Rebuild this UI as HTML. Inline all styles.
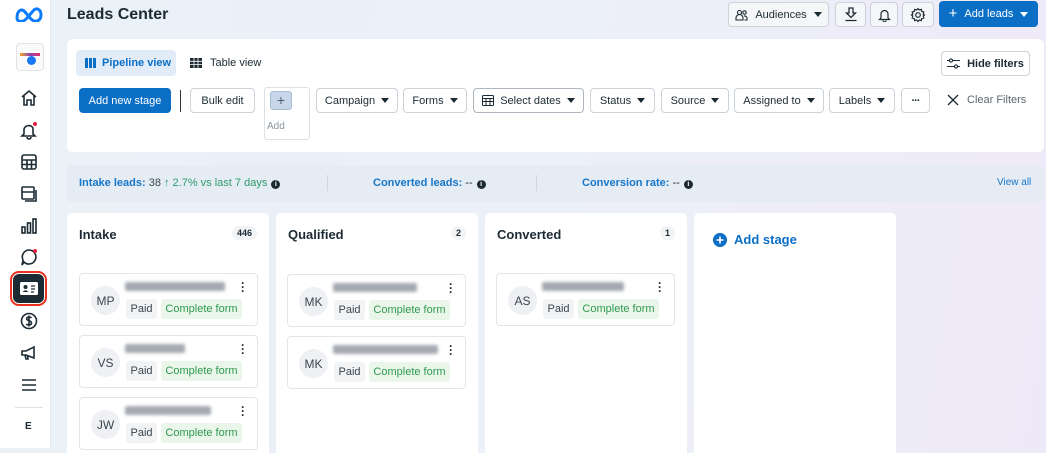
<!DOCTYPE html>
<html><head><meta charset="utf-8"><style>
*{box-sizing:border-box;margin:0;padding:0}
body{width:1046px;height:448px;overflow:hidden;font-family:"Liberation Sans",sans-serif;background:linear-gradient(100deg,#eaf1f7 0%,#ecf0f8 50%,#eee9f8 100%);position:relative;color:#1c2b33}
.a{position:absolute}
.side{left:0;top:0;width:51px;height:448px;background:#fff;border-right:1px solid #e4e8ee}
.btn{position:absolute;height:25px;border:1px solid #cbd2d9;border-radius:4px;background:#fff;font-size:11px;display:flex;align-items:center;justify-content:center;gap:6px;color:#1c2b33}
.caret{width:0;height:0;border-left:4px solid transparent;border-right:4px solid transparent;border-top:5px solid #1c2b33;display:inline-block}
.panel{background:#fff;border-radius:6px}
.col{background:#fff;border-radius:5px 5px 0 0;top:213px;height:240px}
.col h3{position:absolute;left:12px;top:14px;font-size:13px;font-weight:bold}
.cnt{position:absolute;top:13px;font-size:9px;font-weight:bold;background:#f1f3f5;border-radius:8px;padding:2px 5px}
.card{position:absolute;width:179px;height:53px;border:1px solid #e2e5e9;border-radius:4px;background:#fff}
.av{position:absolute;left:11px;top:12px;width:29px;height:29px;border-radius:50%;background:#eef0f3;font-size:12px;display:flex;align-items:center;justify-content:center;color:#3a474f}
.nm{position:absolute;left:45px;top:8px;height:9px;background:#a5aab1;filter:blur(1.5px);border-radius:2px}
.tg{position:absolute;top:25px;height:20px;font-size:11px;display:flex;align-items:center;justify-content:center;border-radius:3px}
.paid{left:46px;width:31px;background:#f1f3f5;color:#3a474f}
.cf{left:81px;width:81px;background:#eaf6ea;color:#2e9a4f}
.dots{position:absolute;right:12px;top:7px;font-size:12px;font-weight:bold;line-height:4px;color:#1c2b33}
.ic{position:absolute;left:19px;width:20px;height:20px}
.st{position:absolute;top:177px;font-size:11px}
.i{display:inline-block;width:9px;height:9px;border-radius:50%;background:#1c2b33;color:#fff;font-size:7px;text-align:center;line-height:9px;font-weight:bold;margin-left:4px}
</style></head><body>
<div class="a side">
<svg class="a" style="left:14px;top:6px" width="30" height="16" viewBox="0 0 30 16"><path d="M3 12 C3 4 8 2 11 6 L17 13 C21 17 27 15 27 9 C27 3 22 1 19 5 L13 12 C9 17 3 16 3 12Z" fill="none" stroke="#0a7cff" stroke-width="3"/></svg>
<div class="a" style="left:16px;top:43px;width:28px;height:28px;border:1px solid #e0e3e7;border-radius:4px;background:#fafafa"><div class="a" style="left:10px;top:12px;width:9px;height:9px;border-radius:50%;background:#1877f2"></div><div class="a" style="left:3px;top:9px;width:20px;height:3px;background:linear-gradient(90deg,#f5a623,#8e44ad,#e1306c)"></div></div>
<svg class="ic" style="top:88px" viewBox="0 0 20 20" fill="none" stroke="#1c2b33" stroke-width="1.6"><path d="M3 9 L10 3 L17 9 M5 8 V17 H8 V12 H12 V17 H15 V8"/></svg>
<svg class="ic" style="top:120px" viewBox="0 0 20 20" fill="none" stroke="#1c2b33" stroke-width="1.6"><path d="M5 14 V9 A5 5 0 0 1 14 8 V14 L16 16 H3 Z M8 17 A2 2 0 0 0 12 17"/><circle cx="16" cy="4" r="2" fill="#e41e3f" stroke="none"/></svg>
<svg class="ic" style="top:152px" viewBox="0 0 20 20" fill="none" stroke="#1c2b33" stroke-width="1.6"><rect x="3" y="3" width="14" height="14" rx="2"/><path d="M3 8 H17 M3 12.5 H17 M8 8 V17 M12.5 8 V17"/></svg>
<svg class="ic" style="top:184px" viewBox="0 0 20 20" fill="none" stroke="#1c2b33" stroke-width="1.6"><rect x="3" y="3" width="12" height="12" rx="1"/><path d="M3 8 H15 M6 17 H17 V6"/></svg>
<svg class="ic" style="top:216px" viewBox="0 0 20 20" fill="none" stroke="#1c2b33" stroke-width="1.6"><rect x="3" y="11" width="3" height="6"/><rect x="8.5" y="7" width="3" height="10"/><rect x="14" y="3" width="3" height="14"/></svg>
<svg class="ic" style="top:247px" viewBox="0 0 20 20" fill="none" stroke="#1c2b33" stroke-width="1.6"><path d="M10 3 A7 7 0 1 1 5 15 L3 18 L4 13 A7 7 0 0 1 10 3Z"/><circle cx="16" cy="4" r="2" fill="#e41e3f" stroke="none"/></svg>
<div class="a" style="left:10px;top:271px;width:37px;height:35px;border:2px solid #e8321e;border-radius:9px"></div>
<div class="a" style="left:13px;top:274px;width:31px;height:29px;background:#1c2b33;border-radius:6px"></div>
<svg class="a" style="left:19px;top:280px" width="20" height="17" viewBox="0 0 20 17"><rect x="1" y="2" width="18" height="13" rx="1.5" fill="#fff"/><circle cx="6.5" cy="7" r="2" fill="#1c2b33"/><path d="M3.5 12 Q6.5 8.5 9.5 12Z" fill="#1c2b33"/><path d="M12 6 H16 M12 9 H16 M12 12 H15" stroke="#1c2b33" stroke-width="1.3"/></svg>
<svg class="ic" style="top:311px" viewBox="0 0 20 20" fill="none" stroke="#1c2b33" stroke-width="1.6"><circle cx="10" cy="10" r="7.5"/><path d="M12.5 7 C11.5 5.5 7.5 5.7 7.7 8 C8 10 12.5 9 12.5 12 C12.5 14.3 8.5 14.5 7.3 13 M10 4.5 V15.5"/></svg>
<svg class="ic" style="top:343px" viewBox="0 0 20 20" fill="none" stroke="#1c2b33" stroke-width="1.6"><path d="M3 8 H7 L15 4 V15 L7 12 H3 Z M6 12 L7 16 H9 L8.5 12"/></svg>
<svg class="ic" style="top:375px" viewBox="0 0 20 20" fill="none" stroke="#1c2b33" stroke-width="1.6"><path d="M3 5 H17 M3 10 H17 M3 15 H17"/></svg>
<div class="a" style="left:15px;top:407px;width:28px;height:1px;background:#dde1e5"></div>
<div class="a" style="left:25px;top:421px;font-size:10px;font-weight:bold">E</div>
</div>

<div class="a" style="left:67px;top:6px;font-size:16px;font-weight:bold">Leads Center</div>
<div class="btn" style="left:728px;top:2px;width:101px;background:#f5f6f7;gap:7px"><svg width="13" height="12" viewBox="0 0 13 12" fill="none" stroke="#1c2b33" stroke-width="1.1"><circle cx="4.5" cy="3.5" r="2"/><circle cx="9.5" cy="3.5" r="1.7"/><path d="M1 11 V9 A3 3 0 0 1 8 9 V11Z M9 7 A2.5 2.5 0 0 1 12 9 V11 H9.5"/></svg>Audiences <span class="caret"></span></div>
<div class="btn" style="left:835px;top:2px;width:31px;background:#f5f6f7"><svg width="14" height="15" viewBox="0 0 14 15" fill="none" stroke="#1c2b33" stroke-width="1.3"><path d="M5 1 H9 V6 H11.5 L7 10.5 L2.5 6 H5Z M1.5 13.5 H12.5"/></svg></div>
<div class="btn" style="left:870px;top:2px;width:28px;background:#f5f6f7"><svg width="13" height="14" viewBox="0 0 13 14" fill="none" stroke="#1c2b33" stroke-width="1.2"><path d="M3 10 V6 A3.5 3.5 0 0 1 10 6 V10 L11.5 11.5 H1.5Z M5 12.5 A1.5 1.5 0 0 0 8 12.5"/></svg></div>
<div class="btn" style="left:902px;top:2px;width:32px;background:#f5f6f7"><svg width="16" height="16" viewBox="0 0 16 16" fill="none" stroke="#1c2b33" stroke-width="1.2"><circle cx="8" cy="8" r="2.3"/><path d="M8 1.5 L9.3 3 L11.3 2.4 L11.8 4.4 L13.8 5 L13.2 7 L14.5 8 L13.2 9 L13.8 11 L11.8 11.6 L11.3 13.6 L9.3 13 L8 14.5 L6.7 13 L4.7 13.6 L4.2 11.6 L2.2 11 L2.8 9 L1.5 8 L2.8 7 L2.2 5 L4.2 4.4 L4.7 2.4 L6.7 3Z"/></svg></div>
<div class="btn" style="left:939px;top:1px;width:99px;height:26px;background:#0b6fc6;border-color:#0b6fc6;color:#fff;gap:7px"><span style="font-size:15px;line-height:10px">+</span>Add leads <span class="caret" style="border-top-color:#fff"></span></div>

<div class="a panel" style="left:67px;top:39px;width:977px;height:113px"></div>
<div class="a" style="left:76px;top:50px;width:100px;height:26px;background:#e1ecf8;border-radius:4px;color:#0b6fc6;font-size:11px;font-weight:bold;display:flex;align-items:center;gap:6px;padding-left:9px"><svg width="11" height="10"><rect x="0" y="0" width="3" height="10" fill="#0b6fc6"/><rect x="4" y="0" width="3" height="10" fill="#0b6fc6"/><rect x="8" y="0" width="3" height="10" fill="#0b6fc6"/></svg>Pipeline view</div>
<div class="a" style="left:190px;top:57px;font-size:11px;display:flex;gap:8px;align-items:center"><svg width="12" height="10"><rect width="12" height="10" fill="#1c2b33"/><path d="M0 3.3H12M0 6.6H12M4 0V10M8 0V10" stroke="#fff" stroke-width="0.8"/></svg>Table view</div>
<div class="btn" style="left:941px;top:51px;width:89px;height:25px;font-weight:bold;gap:7px"><svg width="13" height="11" fill="none" stroke="#1c2b33" stroke-width="1.1"><path d="M0 2.5H13M0 8.5H13"/><circle cx="4" cy="2.5" r="1.6" fill="#fff"/><circle cx="9" cy="8.5" r="1.6" fill="#fff"/></svg>Hide filters</div>
<div class="btn" style="left:79px;top:88px;width:92px;background:#0b6fc6;border-color:#0b6fc6;color:#fff">Add new stage</div>
<div class="a" style="left:180px;top:90px;width:1px;height:22px;background:#333"></div>
<div class="btn" style="left:190px;top:88px;width:65px">Bulk edit</div>
<div class="a" style="left:264px;top:87px;width:46px;height:53px;border:1px solid #dde1e5;border-radius:3px"></div>
<div class="a" style="left:270px;top:91px;width:22px;height:19px;background:#c8d6ea;border:1px solid #a9bcd6;border-radius:3px;color:#4c5e74;font-size:14px;text-align:center;line-height:16px">+</div>
<div class="a" style="left:267px;top:121px;font-size:10px;color:#8a949c">Add</div>
<div class="btn" style="left:316px;top:88px;width:82px">Campaign <span class="caret"></span></div>
<div class="btn" style="left:403px;top:88px;width:64px">Forms <span class="caret"></span></div>
<div class="btn" style="left:473px;top:88px;width:111px;border-color:#aeb6bf"><svg width="12" height="11" fill="none" stroke="#1c2b33" stroke-width="1"><rect x="0.5" y="0.5" width="11" height="10" rx="1"/><path d="M0.5 3.5H11.5M0.5 6.5H11.5M4 3.5V10.5M8 3.5V10.5"/></svg>Select dates <span class="caret"></span></div>
<div class="btn" style="left:590px;top:88px;width:65px">Status <span class="caret"></span></div>
<div class="btn" style="left:661px;top:88px;width:68px">Source <span class="caret"></span></div>
<div class="btn" style="left:734px;top:88px;width:90px">Assigned to <span class="caret"></span></div>
<div class="btn" style="left:829px;top:88px;width:66px">Labels <span class="caret"></span></div>
<div class="btn" style="left:901px;top:88px;width:29px;font-weight:bold;letter-spacing:-1px">···</div>
<div class="a" style="left:947px;top:94px;font-size:11px;color:#5c6870;display:flex;gap:8px;align-items:center"><svg width="12" height="12" stroke="#1c2b33" stroke-width="1.3"><path d="M1 1L11 11M11 1L1 11"/></svg>Clear Filters</div>

<div class="a" style="left:67px;top:165px;width:977px;height:37px;background:#e4ebf3;border-radius:4px;opacity:.9"></div>
<div class="st" style="left:79px;color:#3a474f"><b style="color:#1877c9">Intake leads:</b> 38 <span style="color:#2e9a6a">↑ 2.7% vs last 7 days</span><span class="i">i</span></div>
<div class="a" style="left:327px;top:175px;width:1px;height:16px;background:#cfd6de"></div>
<div class="st" style="left:373px"><b style="color:#1877c9">Converted leads:</b> --<span class="i">i</span></div>
<div class="a" style="left:536px;top:175px;width:1px;height:16px;background:#cfd6de"></div>
<div class="st" style="left:582px"><b style="color:#1877c9">Conversion rate:</b> --<span class="i">i</span></div>
<div class="st" style="left:997px;color:#1877c9;font-size:10px">View all</div>

<div class="a col" style="left:67px;width:202px"><h3>Intake</h3><div class="cnt" style="right:12px">446</div></div>
<div class="a col" style="left:276px;width:202px"><h3>Qualified</h3><div class="cnt" style="right:12px">2</div></div>
<div class="a col" style="left:485px;width:202px"><h3>Converted</h3><div class="cnt" style="right:12px">1</div></div>
<div class="a col" style="left:694px;width:202px"><div class="a" style="left:19px;top:19px;display:flex;gap:7px;align-items:center;color:#0b6fc6;font-size:13px;font-weight:bold"><svg width="14" height="14"><circle cx="7" cy="7" r="7" fill="#0b6fc6"/><path d="M7 3.5V10.5M3.5 7H10.5" stroke="#fff" stroke-width="1.6"/></svg>Add stage</div></div>

<div class="card" style="left:79px;top:273px"><div class="av">MP</div><div class="nm" style="width:100px"></div><div class="dots">·<br>·<br>·</div><div class="tg paid">Paid</div><div class="tg cf">Complete form</div></div>
<div class="card" style="left:79px;top:335px"><div class="av">VS</div><div class="nm" style="width:60px"></div><div class="dots">·<br>·<br>·</div><div class="tg paid">Paid</div><div class="tg cf">Complete form</div></div>
<div class="card" style="left:79px;top:397px"><div class="av">JW</div><div class="nm" style="width:86px"></div><div class="dots">·<br>·<br>·</div><div class="tg paid">Paid</div><div class="tg cf">Complete form</div></div>
<div class="card" style="left:287px;top:274px"><div class="av">MK</div><div class="nm" style="width:84px"></div><div class="dots">·<br>·<br>·</div><div class="tg paid">Paid</div><div class="tg cf">Complete form</div></div>
<div class="card" style="left:287px;top:336px"><div class="av">MK</div><div class="nm" style="width:105px"></div><div class="dots">·<br>·<br>·</div><div class="tg paid">Paid</div><div class="tg cf">Complete form</div></div>
<div class="card" style="left:496px;top:273px"><div class="av">AS</div><div class="nm" style="width:82px"></div><div class="dots">·<br>·<br>·</div><div class="tg paid">Paid</div><div class="tg cf">Complete form</div></div>
</body></html>
